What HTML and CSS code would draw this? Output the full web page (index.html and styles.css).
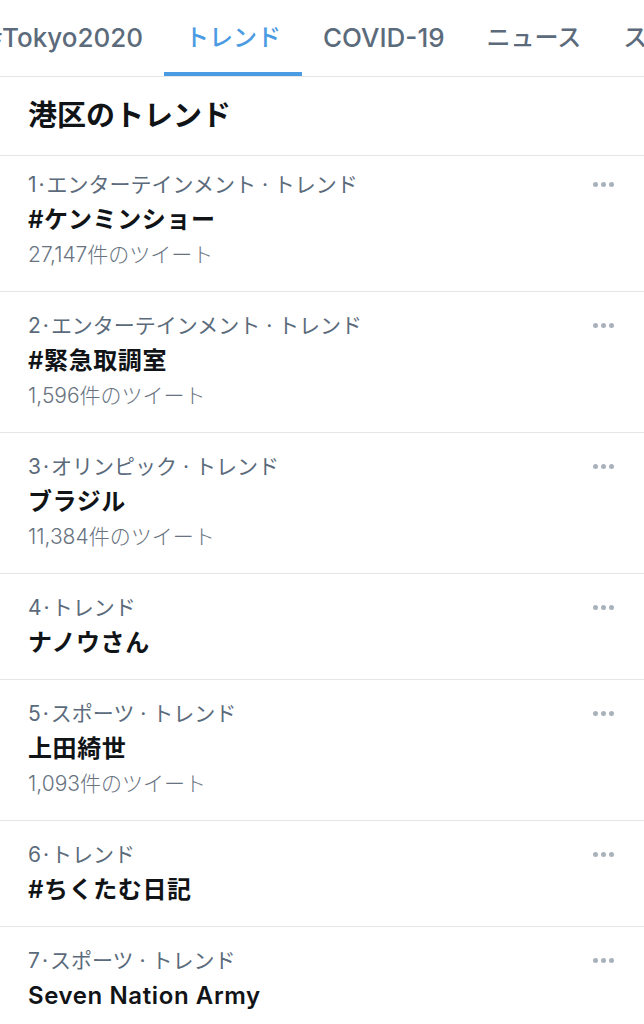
FILE: index.html
```html
<!DOCTYPE html>
<html lang="ja">
<head>
<meta charset="utf-8">
<title>トレンド</title>
<link rel="stylesheet" href="styles.css">
</head>
<body>
<nav class="tabs">
  <div class="tab tab-first tab-latin">#Tokyo2020</div>
  <div class="tab tab-active">トレンド</div>
  <div class="tab tab-latin">COVID-19</div>
  <div class="tab">ニュース</div>
  <div class="tab">スポーツ</div>
</nav>
<h1 class="heading">港区のトレンド</h1>
<ul class="trends">
  <li class="trend">
    <div class="meta">1<span class="mid">·</span>エンターテインメント · トレンド</div>
    <div class="title">#ケンミンショー</div>
    <div class="count">27,147件のツイート</div>
    <span class="more"><i></i><i></i><i></i></span>
  </li>
  <li class="trend">
    <div class="meta">2<span class="mid">·</span>エンターテインメント · トレンド</div>
    <div class="title">#緊急取調室</div>
    <div class="count">1,596件のツイート</div>
    <span class="more"><i></i><i></i><i></i></span>
  </li>
  <li class="trend">
    <div class="meta">3<span class="mid">·</span>オリンピック · トレンド</div>
    <div class="title">ブラジル</div>
    <div class="count">11,384件のツイート</div>
    <span class="more"><i></i><i></i><i></i></span>
  </li>
  <li class="trend">
    <div class="meta">4<span class="mid">·</span>トレンド</div>
    <div class="title">ナノウさん</div>
    <span class="more"><i></i><i></i><i></i></span>
  </li>
  <li class="trend">
    <div class="meta">5<span class="mid">·</span>スポーツ · トレンド</div>
    <div class="title">上田綺世</div>
    <div class="count">1,093件のツイート</div>
    <span class="more"><i></i><i></i><i></i></span>
  </li>
  <li class="trend">
    <div class="meta">6<span class="mid">·</span>トレンド</div>
    <div class="title">#ちくたむ日記</div>
    <span class="more"><i></i><i></i><i></i></span>
  </li>
  <li class="trend">
    <div class="meta">7<span class="mid">·</span>スポーツ · トレンド</div>
    <div class="title">Seven Nation Army</div>
    <span class="more"><i></i><i></i><i></i></span>
  </li>
</ul>
</body>
</html>
```
FILE: styles.css
```css
* { box-sizing: border-box; }
html, body {
  margin: 0;
  padding: 0;
  background: #ffffff;
  overflow: hidden;
}
body {
  width: 644px;
  height: 1024px;
  font-family: Inter, "Noto Sans CJK JP", sans-serif;
  color: #14171a;
}
.tabs {
  display: flex;
  height: 77px;
  border-bottom: 1px solid #e3e7ea;
  overflow: hidden;
  white-space: nowrap;
}
.tab {
  flex: none;
  height: 76px;
  padding: 3px 21px 0;
  line-height: 69px;
  font-size: 24px;
  font-weight: 500;
  color: #5b6b7b;
  border-bottom: 4px solid transparent;
}
.tab-latin { font-size: 26px; }
.tab-first {
  width: 200px;
  margin-left: -36px;
  text-align: right;
}
.tab-active {
  color: #4b9be2;
  border-bottom-color: #4b9be2;
}
.heading {
  margin: 0;
  height: 79px;
  line-height: 77px;
  padding: 0 28px;
  font-size: 29px;
  font-weight: 700;
  color: #111417;
  border-bottom: 1px solid #e3e7ea;
}
.trends {
  list-style: none;
  margin: 0;
  padding: 0;
}
.trend {
  position: relative;
  padding: 22px 28px 24px;
  border-bottom: 1px solid #e3e7ea;
}
.trend:first-child { padding-top: 17px; }
.meta {
  font-size: 21px;
  line-height: 24px;
  color: #5b6b7b;
}
.mid { margin: 0 2px; }
.title {
  margin-top: 11px;
  font-size: 24px;
  line-height: 24px;
  font-weight: 600;
  letter-spacing: 0.6px;
  color: #111417;
}
.count {
  margin-top: 11px;
  font-size: 21px;
  line-height: 24px;
  font-weight: 300;
  color: #68737f;
}
.more {
  position: absolute;
  top: 31px;
  right: 30px;
  display: flex;
  gap: 3px;
}
.trend:first-child .more { top: 26px; }
.more i {
  width: 5px;
  height: 5px;
  border-radius: 50%;
  background: #a9b2bb;
}
```
